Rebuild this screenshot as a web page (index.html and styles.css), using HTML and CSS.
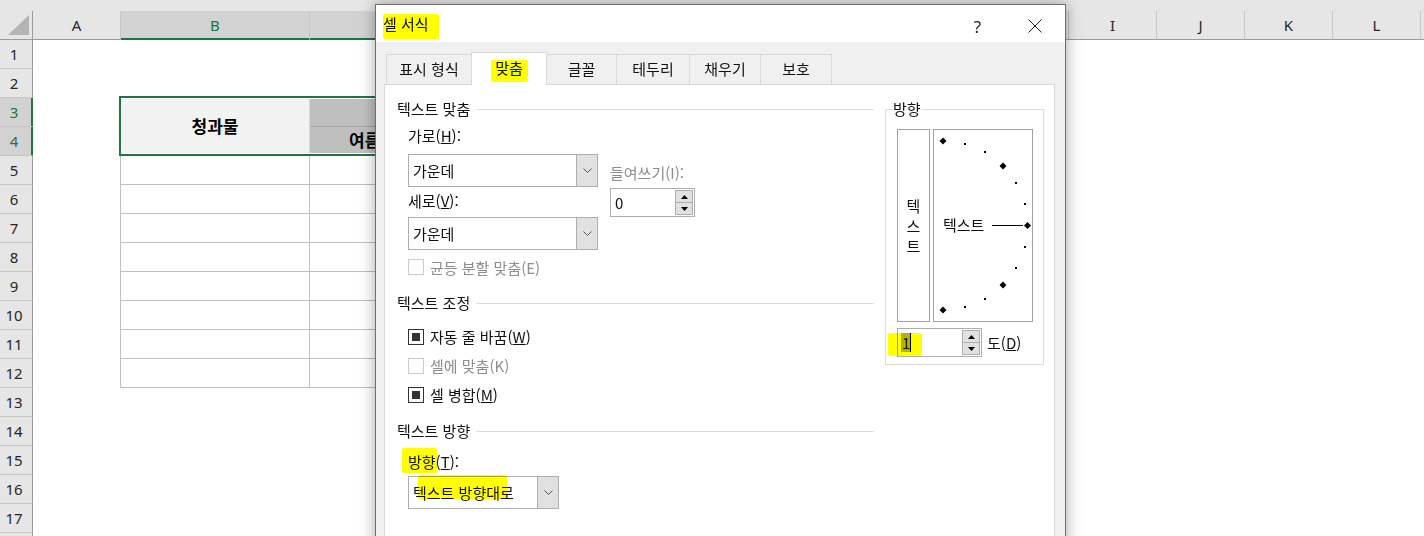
FILE: index.html
```html
<!DOCTYPE html>
<html lang="ko">
<head>
<meta charset="utf-8">
<title>셀 서식</title>
<link rel="stylesheet" href="styles.css">
</head>
<body>
<div class="sheet">
  <div class="topband"></div>
  <div class="colheads">
    <div class="ch corner"><svg width="21" height="20" viewBox="0 0 21 20"><polygon points="21,0 21,20 0,20" fill="#b4b4b4"/></svg></div>
    <div class="ch w-a">A</div>
    <div class="ch w-b sel">B</div>
    <div class="ch w-c sel">C</div>
    <div class="ch w-m">D</div>
    <div class="ch w-m">E</div>
    <div class="ch w-m">F</div>
    <div class="ch w-m">G</div>
    <div class="ch w-m">H</div>
    <div class="ch w-n">I</div>
    <div class="ch w-n">J</div>
    <div class="ch w-n">K</div>
    <div class="ch w-n">L</div>
    <div class="ch w-n"></div>
  </div>
  <div class="sheet-body">
    <div class="rowheads">
      <div class="rh">1</div>
      <div class="rh">2</div>
      <div class="rh sel">3</div>
      <div class="rh sel">4</div>
      <div class="rh">5</div>
      <div class="rh">6</div>
      <div class="rh">7</div>
      <div class="rh">8</div>
      <div class="rh">9</div>
      <div class="rh">10</div>
      <div class="rh">11</div>
      <div class="rh">12</div>
      <div class="rh">13</div>
      <div class="rh">14</div>
      <div class="rh">15</div>
      <div class="rh">16</div>
      <div class="rh">17</div>
      <div class="rh"></div>
    </div>
    <div class="cells">
      <div class="tbl">
        <div class="c b34">청과물</div>
        <div class="c c3"></div>
        <div class="c c4">여름 과일</div>
        <div class="c"></div><div class="c"></div>
        <div class="c"></div><div class="c"></div>
        <div class="c"></div><div class="c"></div>
        <div class="c"></div><div class="c"></div>
        <div class="c"></div><div class="c"></div>
        <div class="c"></div><div class="c"></div>
        <div class="c"></div><div class="c"></div>
        <div class="c"></div><div class="c"></div>
        <div class="selection"></div>
      </div>
    </div>
  </div>
</div>

<div class="dialog">
  <div class="titlebar">
    <div class="title">셀 서식</div>
    <div class="capbtn help">?</div>
    <div class="capbtn close"><svg width="14" height="14" viewBox="0 0 14 14"><path d="M0.5 0.5 L13.5 13.5 M13.5 0.5 L0.5 13.5" stroke="#222" stroke-width="1" fill="none"/></svg></div>
  </div>
  <div class="tabs">
    <div class="tab t1">표시 형식</div>
    <div class="tab t2 active">맞춤</div>
    <div class="tab t3">글꼴</div>
    <div class="tab t4">테두리</div>
    <div class="tab t5">채우기</div>
    <div class="tab t6">보호</div>
  </div>
  <div class="panel">
    <div class="leftcol">
      <div class="sec">텍스트 맞춤</div>
      <div class="alignrow">
        <div class="acol">
          <div class="lbl">가로(<u>H</u>):</div>
          <div class="combo cb190 mt8">
            <div class="val">가운데</div>
            <div class="btn"><svg width="9" height="5" viewBox="0 0 9 5"><path d="M0.5 0.5 L4.5 4.5 L8.5 0.5" fill="none" stroke="#555"/></svg></div>
          </div>
          <div class="lbl mt4">세로(<u>V</u>):</div>
          <div class="combo cb190 mt6">
            <div class="val">가운데</div>
            <div class="btn"><svg width="9" height="5" viewBox="0 0 9 5"><path d="M0.5 0.5 L4.5 4.5 L8.5 0.5" fill="none" stroke="#555"/></svg></div>
          </div>
        </div>
        <div class="indent">
          <div class="lbl dis-t">들여쓰기(I):</div>
          <div class="spin mt5">
            <div class="sv">0</div>
            <div class="sbtns">
              <div class="sb"><svg width="7" height="4" viewBox="0 0 7 4"><polygon points="0,4 3.5,0 7,4" fill="#000"/></svg></div>
              <div class="sb"><svg width="7" height="4" viewBox="0 0 7 4"><polygon points="0,0 7,0 3.5,4" fill="#000"/></svg></div>
            </div>
          </div>
        </div>
      </div>
      <div class="chk mt7"><span class="box dis"></span><span class="dis-t">균등 분할 맞춤(E)</span></div>

      <div class="sec mt16">텍스트 조정</div>
      <div class="chk tall mt9"><span class="box on"></span><span>자동 줄 바꿈(<u>W</u>)</span></div>
      <div class="chk tall"><span class="box dis"></span><span class="dis-t">셀에 맞춤(K)</span></div>
      <div class="chk tall"><span class="box on"></span><span>셀 병합(<u>M</u>)</span></div>

      <div class="sec mt12">텍스트 방향</div>
      <div class="lbl mt11">방향(<u>T</u>):</div>
      <div class="combo cb151 mt4 ml11">
        <div class="val">텍스트 방향대로</div>
        <div class="btn"><svg width="9" height="5" viewBox="0 0 9 5"><path d="M0.5 0.5 L4.5 4.5 L8.5 0.5" fill="none" stroke="#555"/></svg></div>
      </div>
    </div>

    <fieldset class="orient">
      <legend>방향</legend>
      <div class="oinner">
        <div class="vbox"><span>텍</span><span>스</span><span>트</span></div>
        <div class="dial">
          <svg class="dots" width="98" height="191" viewBox="0 0 98 191">
            <g fill="#000">
              <polygon points="9,7.5 12.5,11 9,14.5 5.5,11"/>
              <polygon points="69,32.5 72.5,36 69,39.5 65.5,36"/>
              <polygon points="93.5,92 97,95.5 93.5,99 90,95.5"/>
              <polygon points="69,151.5 72.5,155 69,158.5 65.5,155"/>
              <polygon points="9,176.5 12.5,180 9,183.5 5.5,180"/>
              <rect x="30" y="13" width="2" height="2"/>
              <rect x="50" y="21" width="2" height="2"/>
              <rect x="81" y="52" width="2" height="2"/>
              <rect x="90" y="73" width="2" height="2"/>
              <rect x="90" y="116" width="2" height="2"/>
              <rect x="81" y="137" width="2" height="2"/>
              <rect x="50" y="168" width="2" height="2"/>
              <rect x="30" y="176" width="2" height="2"/>
            </g>
            <line x1="58" y1="95.5" x2="89" y2="95.5" stroke="#000" stroke-width="1"/>
          </svg>
          <span class="dialtext">텍스트</span>
        </div>
      </div>
      <div class="degrow">
        <div class="spin deg">
          <div class="sv"><span class="selnum">1</span></div>
          <div class="sbtns">
            <div class="sb"><svg width="7" height="4" viewBox="0 0 7 4"><polygon points="0,4 3.5,0 7,4" fill="#000"/></svg></div>
            <div class="sb"><svg width="7" height="4" viewBox="0 0 7 4"><polygon points="0,0 7,0 3.5,4" fill="#000"/></svg></div>
          </div>
        </div>
        <div class="deglbl">도(<u>D</u>)</div>
      </div>
    </fieldset>
  </div>

  <div class="hl hl-title"></div>
  <div class="hl hl-tab"></div>
  <div class="hl hl-dir"></div>
  <div class="hl hl-combo"></div>
  <div class="hl hl-deg"></div>
</div>
</body>
</html>
```

FILE: styles.css
```css
html, body {
  margin: 0;
  height: 536px;
  overflow: hidden;
  background: #fff;
}
body {
  position: relative;
  font-family: "Noto Sans", "Noto Sans CJK KR", sans-serif;
}

/* ---------- spreadsheet ---------- */
.sheet { width: 1424px; }
.topband { height: 11px; background: #e6e6e6; }
.colheads { display: flex; height: 29px; background: #e6e6e6; }
.ch {
  flex: none;
  height: 29px;
  box-sizing: border-box;
  border-right: 1px solid #c6c6c6;
  border-bottom: 1px solid #9b9b9b;
  text-align: center;
  line-height: 28px;
  font-size: 15px;
  color: #262626;
  font-family: "Noto Sans", sans-serif;
}
.corner {
  width: 33px;
  border-right-color: #9b9b9b;
  display: flex;
  justify-content: flex-end;
  align-items: flex-end;
  padding: 0 3px 4px 0;
}
.corner svg { display: block; }
.w-a { width: 88px; }
.w-b, .w-c { width: 189px; }
.w-m { width: 114px; }
.w-n { width: 88px; }
.ch.sel {
  background: #d2d2d2;
  color: #217346;
  border-bottom-color: #217346;
  box-shadow: inset 0 -1px 0 #217346;
}

.sheet-body { display: flex; }
.rowheads { width: 33px; flex: none; }
.rh {
  height: 29px;
  box-sizing: border-box;
  border-bottom: 1px solid #c6c6c6;
  border-right: 1px solid #9b9b9b;
  background: #e6e6e6;
  text-align: center;
  line-height: 28px;
  font-size: 15px;
  color: #262626;
  padding-right: 4px;
}
.rh.sel {
  background: #d2d2d2;
  color: #217346;
  border-right-color: #217346;
  box-shadow: inset -1px 0 0 #217346;
}

.cells { flex: 1; }
.tbl {
  position: relative;
  display: grid;
  grid-template-columns: 189px 189px;
  grid-auto-rows: 29px;
  width: max-content;
  margin: 57px 0 0 87px;
  border-left: 1px solid #bfbfbf;
  border-top: 1px solid #bfbfbf;
}
.c {
  box-sizing: border-box;
  border-right: 1px solid #bfbfbf;
  border-bottom: 1px solid #bfbfbf;
}
.c.b34 {
  grid-row: span 2;
  background: #f2f2f2;
  border-right-color: #d9d9d9;
  display: flex;
  align-items: center;
  justify-content: center;
  padding-bottom: 2px;
  font: 700 17px "Noto Sans CJK KR", sans-serif;
  color: #000;
}
.c.c3 { background: #bfbfbf; border-bottom-color: #a6a6a6; }
.c.c4 {
  background: #bfbfbf;
  padding-left: 39px;
  font: 700 17px/26px "Noto Sans CJK KR", sans-serif;
  color: #000;
}
.selection {
  position: absolute;
  left: -2px;
  top: -2px;
  width: 382px;
  height: 60px;
  box-sizing: border-box;
  border: 2px solid #217346;
  box-shadow: inset 0 0 0 1px #fff;
}

/* ---------- dialog ---------- */
.dialog {
  position: absolute;
  left: 375px;
  top: 4px;
  width: 691px;
  height: 560px;
  box-sizing: border-box;
  border: 1px solid #6e6e6e;
  background: #f0f0f0;
  box-shadow: 0 0 14px rgba(0, 0, 0, 0.35);
  z-index: 10;
  font-family: "Noto Sans CJK KR", sans-serif;
  font-size: 15px;
  color: #111;
}
.titlebar {
  height: 37px;
  background: #fff;
  display: flex;
  padding-right: 1px;
}
.title { flex: 1; padding-left: 7px; line-height: 37px; }
.capbtn {
  height: 37px;
  box-sizing: border-box;
  padding-top: 5px;
  display: flex;
  align-items: center;
  justify-content: center;
}
.help {
  width: 57px;
  font-family: "Noto Sans", sans-serif;
  font-size: 17px;
  color: #222;
}
.close { width: 58px; }
.close svg { display: block; }

.tabs {
  display: flex;
  align-items: flex-end;
  height: 42px;
  box-sizing: border-box;
  padding-left: 10px;
}
.tab {
  flex: none;
  height: 30px;
  box-sizing: border-box;
  border: 1px solid #d9d9d9;
  border-bottom: none;
  margin-right: -1px;
  background: #f0f0f0;
  text-align: center;
  line-height: 28px;
}
.tab.active {
  position: relative;
  z-index: 2;
  height: 33px;
  margin-bottom: -1px;
  background: #fff;
  line-height: 30px;
}
.t1 { width: 86px; }
.t2 { width: 76px; }
.t3 { width: 71px; }
.t4 { width: 74px; }
.t5 { width: 72px; }
.t6 { width: 72px; }

.panel {
  margin-left: 8px;
  width: 671px;
  height: 470px;
  box-sizing: border-box;
  border: 1px solid #d9d9d9;
  background: #fff;
  display: flex;
  align-items: flex-start;
  padding: 14px 0 0 12px;
}
.leftcol { width: 477px; flex: none; }
.sec {
  display: flex;
  align-items: center;
  gap: 6px;
  height: 20px;
  line-height: 20px;
  white-space: nowrap;
}
.sec::after {
  content: "";
  flex: 1;
  height: 1px;
  background: #dcdcdc;
}
.lbl { margin-left: 11px; height: 20px; line-height: 20px; white-space: nowrap; }
.acol .lbl, .indent .lbl { margin-left: 0; }
.dis-t { color: #8d8d8d; }

.mt4 { margin-top: 4px; }
.mt5 { margin-top: 5px; }
.mt6 { margin-top: 6px; }
.mt7 { margin-top: 7px; }
.mt8 { margin-top: 8px; }
.mt9 { margin-top: 9px; }
.mt11 { margin-top: 11px; }
.mt12 { margin-top: 12px; }
.mt16 { margin-top: 16px; }
.ml11 { margin-left: 11px; }

.alignrow { display: flex; margin: 7px 0 0 11px; }
.acol { width: 190px; }
.indent { margin-left: 12px; padding-top: 37px; }

.combo {
  display: flex;
  height: 33px;
  box-sizing: border-box;
  border: 1px solid #adadad;
  background: #fff;
}
.cb190 { width: 190px; }
.cb151 { width: 151px; }
.combo .val { flex: 1; padding-left: 4px; line-height: 31px; white-space: nowrap; }
.combo .btn {
  width: 21px;
  box-sizing: border-box;
  border-left: 1px solid #adadad;
  background: #e1e1e1;
  display: flex;
  align-items: center;
  justify-content: center;
}
.combo .btn svg { display: block; }

.spin {
  display: flex;
  align-items: center;
  width: 85px;
  height: 29px;
  box-sizing: border-box;
  border: 1px solid #adadad;
  background: #fff;
  padding: 1px 1px 1px 4px;
}
.spin .sv { flex: 1; line-height: 20px; }
.sbtns { display: flex; flex-direction: column; width: 18px; height: 25px; }
.sb {
  flex: 1;
  box-sizing: border-box;
  border: 1px solid #adadad;
  background: #e1e1e1;
  display: flex;
  align-items: center;
  justify-content: center;
}
.sb + .sb { border-top: none; }
.sb svg { display: block; }

.chk {
  display: flex;
  align-items: center;
  gap: 6px;
  margin-left: 11px;
  height: 20px;
  white-space: nowrap;
}
.chk.tall { height: 29px; }
.box {
  width: 16px;
  height: 16px;
  box-sizing: border-box;
  border: 1px solid #333;
  padding: 3px;
  background: #fff;
  flex: none;
}
.box.on::before {
  content: "";
  display: block;
  width: 8px;
  height: 8px;
  background: #333;
}
.box.dis { border-color: #cccccc; }

/* orientation group */
.orient {
  margin: 0 0 0 11px;
  padding: 0;
  width: 159px;
  min-width: 0;
  box-sizing: border-box;
  border: 1px solid #dcdcdc;
}
.orient legend {
  margin-left: 7px;
  padding: 0;
  line-height: 20px;
  font-size: 15px;
}
.oinner { display: flex; gap: 3px; padding: 10px 0 0 11px; }
.vbox {
  width: 33px;
  height: 193px;
  box-sizing: border-box;
  border: 1px solid #a0a0a0;
  display: flex;
  flex-direction: column;
  align-items: center;
  justify-content: center;
  line-height: 20px;
}
.dial {
  position: relative;
  width: 100px;
  height: 193px;
  box-sizing: border-box;
  border: 1px solid #a0a0a0;
  display: flex;
  align-items: center;
  padding-left: 9px;
  padding-bottom: 2px;
}
.dots { position: absolute; left: 0; top: 0; }
.dialtext { position: relative; line-height: 20px; }
.degrow { display: flex; align-items: center; margin: 6px 0 7px 11px; }
.spin.deg { padding-left: 3px; }
.selnum {
  display: inline-block;
  background: #b4b4b4;
  border-right: 1px solid #000;
  line-height: 19px;
  padding-left: 1px;
}
.deglbl { margin-left: 5px; line-height: 20px; }

/* yellow marker highlights drawn over the screenshot */
.hl {
  position: absolute;
  background: #ffff00;
  mix-blend-mode: multiply;
  z-index: 5;
  border-radius: 2px;
}
.hl-title { left: 7px; top: 9px; width: 56px; height: 25px; }
.hl-tab { left: 115px; top: 55px; width: 37px; height: 22px; }
.hl-dir { left: 26px; top: 443px; width: 35px; height: 25px; }
.hl-combo { left: 42px; top: 470px; width: 89px; height: 24px; }
.hl-deg { left: 512px; top: 328px; width: 34px; height: 23px; }
```
